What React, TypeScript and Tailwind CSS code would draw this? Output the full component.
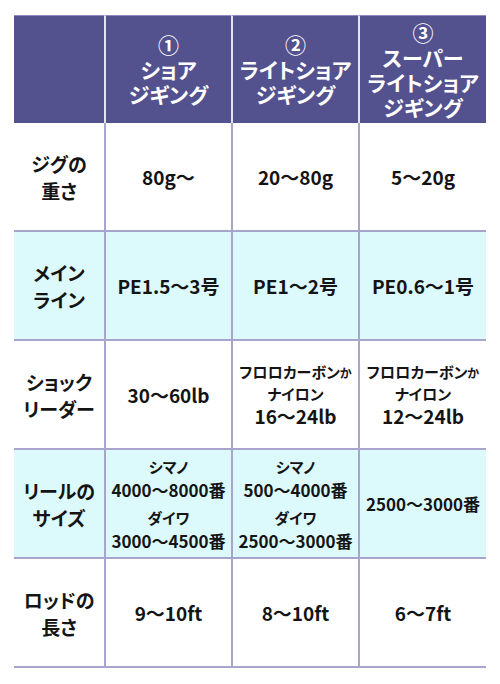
import React from 'react'

type Cell = React.ReactNode

const Small = ({ children }: { children: React.ReactNode }) => (
  <div className="text-[15px] leading-[22px]">{children}</div>
)

const rows: { label: string[]; cells: Cell[]; tint: boolean }[] = [
  { label: ['ジグの', '重さ'], cells: ['80g〜', '20〜80g', '5〜20g'], tint: false },
  { label: ['メイン', 'ライン'], cells: ['PE1.5〜3号', 'PE1〜2号', 'PE0.6〜1号'], tint: true },
  {
    label: ['ショック', 'リーダー'],
    cells: [
      '30〜60lb',
      <div key="a" className="leading-[21px]">
        <div className="text-[15px]">
          フロロカーボン<span className="text-[12px]">か</span>
        </div>
        <div className="text-[15px]">ナイロン</div>
        <div className="leading-[24px]">16〜24lb</div>
      </div>,
      <div key="b" className="leading-[21px]">
        <div className="text-[15px]">
          フロロカーボン<span className="text-[12px]">か</span>
        </div>
        <div className="text-[15px]">ナイロン</div>
        <div className="leading-[24px]">12〜24lb</div>
      </div>,
    ],
    tint: false,
  },
  {
    label: ['リールの', 'サイズ'],
    cells: [
      <div key="a" className="flex flex-col gap-[6px]">
        <div>
          <Small>シマノ</Small>
          <div className="text-[17px] leading-[23px]">4000〜8000番</div>
        </div>
        <div>
          <Small>ダイワ</Small>
          <div className="text-[17px] leading-[23px]">3000〜4500番</div>
        </div>
      </div>,
      <div key="b" className="flex flex-col gap-[6px]">
        <div>
          <Small>シマノ</Small>
          <div className="text-[17px] leading-[23px]">500〜4000番</div>
        </div>
        <div>
          <Small>ダイワ</Small>
          <div className="text-[17px] leading-[23px]">2500〜3000番</div>
        </div>
      </div>,
      <div key="c" className="text-[17px]">2500〜3000番</div>,
    ],
    tint: true,
  },
  { label: ['ロッドの', '長さ'], cells: ['9〜10ft', '8〜10ft', '6〜7ft'], tint: false },
]

const headers = [
  ['①', 'ショア', 'ジギング'],
  ['②', 'ライトショア', 'ジギング'],
  ['③', 'スーパー', 'ライトショア', 'ジギング'],
]

export default function App() {
  return (
    <div className="min-h-[684px] w-[500px] bg-white px-[14px] pt-[15px] font-['Noto_Sans_CJK_JP',sans-serif] font-bold text-[#141414] [font-feature-settings:'palt']">
      <div className="grid grid-cols-[90px_127px_127px_128px]">
        {/* ヘッダー */}
        <div className="h-[108px] border-t border-[#8d8ac0] bg-[#54518f]" />
        {headers.map((h, i) => (
          <div
            key={i}
            className="flex h-[108px] flex-col items-center justify-center border-l-2 border-t border-l-[#e4e3f3] border-t-[#8d8ac0] bg-[#54518f] text-center text-[21px] leading-[25px] text-white"
          >
            {h.map((line, j) => (
              <div key={j}>{line}</div>
            ))}
          </div>
        ))}

        {/* 本体 */}
        {rows.map((row, r) => (
          <React.Fragment key={r}>
            <div
              className={`flex h-[109px] flex-col items-center justify-center border-b-2 border-[#a7a5cb] text-center text-[19px] leading-[27px] ${
                row.tint ? 'bg-[#dcfafc]' : 'bg-white'
              }`}
            >
              {row.label.map((l, j) => (
                <div key={j}>{l}</div>
              ))}
            </div>
            {row.cells.map((c, j) => (
              <div
                key={j}
                className={`flex h-[109px] items-center justify-center border-b-2 border-l-2 border-[#a7a5cb] text-center text-[19px] leading-[24px] ${
                  row.tint ? 'bg-[#dcfafc]' : 'bg-white'
                }`}
              >
                {c}
              </div>
            ))}
          </React.Fragment>
        ))}
      </div>
    </div>
  )
}
